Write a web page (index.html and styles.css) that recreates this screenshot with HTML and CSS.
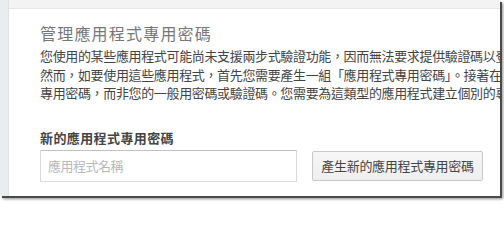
FILE: index.html
```html
<!DOCTYPE html>
<html lang="zh-TW">
<head>
<meta charset="utf-8">
<link rel="stylesheet" href="styles.css">
</head>
<body>
<div class="frame">
  <div class="side"></div>
  <div class="main">
    <div class="topbar"></div>
    <div class="content">
      <h1 class="title">管理應用程式專用密碼</h1>
      <p class="desc">您使用的某些應用程式可能尚未支援兩步式驗證功能，因而無法要求提供驗證碼以登入<br>然而，如要使用這些應用程式，首先您需要產生一組「應用程式專用密碼」。接著在<br>專用密碼，而非您的一般用密碼或驗證碼。您需要為這類型的應用程式建立個別的專用</p>
      <div class="label">新的應用程式專用密碼</div>
      <div class="row">
        <input class="field" type="text" placeholder="應用程式名稱">
        <button class="btn" type="button">產生新的應用程式專用密碼</button>
      </div>
    </div>
  </div>
</div>
</body>
</html>
```

FILE: styles.css
```css
html, body {
  margin: 0;
  padding: 0;
  background: #ffffff;
}
body {
  width: 504px;
  height: 201px;
  overflow: hidden;
  font-family: "Noto Sans CJK TC", "Noto Sans", sans-serif;
}
.frame {
  width: 500px;
  height: 196px;
  display: flex;
  background: #ffffff;
  box-shadow: 2px 2px 0 #4a4a4a, 3px 3px 3px rgba(0, 0, 0, 0.45);
  overflow: hidden;
}
.side {
  width: 8px;
  flex: none;
  background: #eaedef;
  border-right: 1px solid #dfe2e4;
}
.main {
  flex: 1;
  min-width: 0;
  display: flex;
  flex-direction: column;
}
.topbar {
  height: 8px;
  background: #f3f3f3;
  border-bottom: 1px solid #e6e6e6;
  flex: none;
}
.content {
  padding: 14px 0 0 31px;
}
.title {
  margin: 0;
  font-size: 16px;
  font-weight: 400;
  line-height: 20px;
  letter-spacing: 1.2px;
  color: #777777;
}
.desc {
  margin: 4px 0 0;
  font-size: 13px;
  line-height: 18.5px;
  letter-spacing: -0.35px;
  color: #444444;
  white-space: nowrap;
}
.label {
  margin-top: 26px;
  font-size: 13px;
  line-height: 18px;
  font-weight: 700;
  letter-spacing: 0.4px;
  color: #444444;
}
.row {
  margin-top: 3px;
  display: flex;
  align-items: center;
  gap: 15px;
}
.field {
  box-sizing: border-box;
  width: 257px;
  height: 32px;
  margin: 0;
  padding: 0 7px;
  border: 1px solid #d9d9d9;
  border-top-color: #c0c0c0;
  border-radius: 1px;
  font-family: "Noto Sans CJK TC", "Noto Sans", sans-serif;
  font-size: 13px;
  color: #333333;
  background: #ffffff;
  outline: none;
}
.field::placeholder {
  color: #b8b8b8;
  letter-spacing: -0.5px;
}
.btn {
  box-sizing: border-box;
  width: 171px;
  height: 30px;
  margin: 0;
  padding: 0;
  border: 1px solid #c8c8c8;
  border-radius: 2px;
  background: linear-gradient(#f6f6f6, #efefef);
  font-family: "Noto Sans CJK TC", "Noto Sans", sans-serif;
  font-size: 13px;
  letter-spacing: -0.3px;
  color: #444444;
  text-align: center;
}
```
